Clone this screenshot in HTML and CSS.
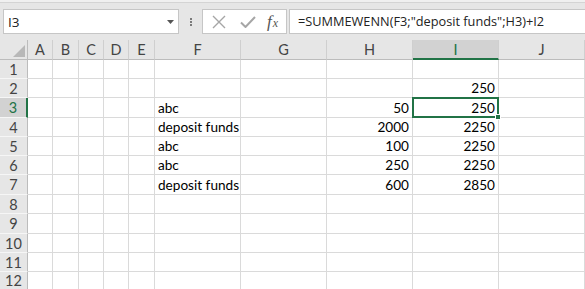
FILE: index.html
```html
<!DOCTYPE html>
<html>
<head>
<meta charset="utf-8">
<link rel="stylesheet" href="styles.css">
</head>
<body>
<div class="topstrip"></div>
<div class="fbar">
  <div class="namebox">
    <span class="nb-text">I3</span>
    <svg class="nb-arrow" width="7" height="4" viewBox="0 0 7 4"><path d="M0 0h7L3.5 4z" fill="#555"/></svg>
  </div>
  <div class="grip"><i></i><i></i><i></i></div>
  <div class="btns">
    <svg class="btn-x" width="14" height="14" viewBox="0 0 14 14"><path d="M1 1L13 13M13 1L1 13" stroke="#a6a6a6" stroke-width="1.4" fill="none"/></svg>
    <svg class="btn-ok" width="16" height="12" viewBox="0 0 16 12"><path d="M1 6.5L5.5 11L15 1" stroke="#a6a6a6" stroke-width="2" fill="none"/></svg>
    <span class="btn-fx"><span class="fx-f">f</span><span class="fx-x">x</span></span>
  </div>
  <div class="formula">=SUMMEWENN(F3;"deposit funds";H3)+I2</div>
</div>
<div class="sheet">
  <div class="corner"><svg width="12" height="12" viewBox="0 0 12 12"><path d="M12 0V12H0z" fill="#b8b8b8"/></svg></div>
  <div class="ch">A</div><div class="ch">B</div><div class="ch">C</div><div class="ch">D</div><div class="ch">E</div>
  <div class="ch">F</div><div class="ch">G</div><div class="ch">H</div><div class="ch sel-col">I</div><div class="ch">J</div>

  <div class="rh">1</div><div class="c"></div><div class="c"></div><div class="c"></div><div class="c"></div><div class="c"></div><div class="c"></div><div class="c"></div><div class="c"></div><div class="c"></div><div class="c"></div>
  <div class="rh">2</div><div class="c"></div><div class="c"></div><div class="c"></div><div class="c"></div><div class="c"></div><div class="c"></div><div class="c"></div><div class="c"></div><div class="c num">250</div><div class="c"></div>
  <div class="rh sel-row">3</div><div class="c"></div><div class="c"></div><div class="c"></div><div class="c"></div><div class="c"></div><div class="c">abc</div><div class="c"></div><div class="c num">50</div><div class="c num active">250<span class="handle"></span></div><div class="c"></div>
  <div class="rh">4</div><div class="c"></div><div class="c"></div><div class="c"></div><div class="c"></div><div class="c"></div><div class="c">deposit funds</div><div class="c"></div><div class="c num">2000</div><div class="c num">2250</div><div class="c"></div>
  <div class="rh">5</div><div class="c"></div><div class="c"></div><div class="c"></div><div class="c"></div><div class="c"></div><div class="c">abc</div><div class="c"></div><div class="c num">100</div><div class="c num">2250</div><div class="c"></div>
  <div class="rh">6</div><div class="c"></div><div class="c"></div><div class="c"></div><div class="c"></div><div class="c"></div><div class="c">abc</div><div class="c"></div><div class="c num">250</div><div class="c num">2250</div><div class="c"></div>
  <div class="rh">7</div><div class="c"></div><div class="c"></div><div class="c"></div><div class="c"></div><div class="c"></div><div class="c">deposit funds</div><div class="c"></div><div class="c num">600</div><div class="c num">2850</div><div class="c"></div>
  <div class="rh">8</div><div class="c"></div><div class="c"></div><div class="c"></div><div class="c"></div><div class="c"></div><div class="c"></div><div class="c"></div><div class="c"></div><div class="c"></div><div class="c"></div>
  <div class="rh">9</div><div class="c"></div><div class="c"></div><div class="c"></div><div class="c"></div><div class="c"></div><div class="c"></div><div class="c"></div><div class="c"></div><div class="c"></div><div class="c"></div>
  <div class="rh">10</div><div class="c"></div><div class="c"></div><div class="c"></div><div class="c"></div><div class="c"></div><div class="c"></div><div class="c"></div><div class="c"></div><div class="c"></div><div class="c"></div>
  <div class="rh">11</div><div class="c"></div><div class="c"></div><div class="c"></div><div class="c"></div><div class="c"></div><div class="c"></div><div class="c"></div><div class="c"></div><div class="c"></div><div class="c"></div>
  <div class="rh">12</div><div class="c"></div><div class="c"></div><div class="c"></div><div class="c"></div><div class="c"></div><div class="c"></div><div class="c"></div><div class="c"></div><div class="c"></div><div class="c"></div>
</div>
</body>
</html>
```
FILE: styles.css
```css
* { box-sizing: border-box; }
html, body { margin: 0; padding: 0; }
body {
  width: 585px;
  height: 289px;
  overflow: hidden;
  background: #e6e6e6;
  font-family: "Lato", "Open Sans", sans-serif;
}
.topstrip {
  height: 3px;
  background: #f0f0f0;
  border-bottom: 1px solid #d4d4d4;
}
.fbar {
  height: 37px;
  display: flex;
  align-items: flex-start;
  padding-top: 6px;
}
.namebox {
  margin-left: 3px;
  width: 176px;
  height: 25px;
  background: #fff;
  border: 1px solid #c6c6c6;
  display: flex;
  align-items: center;
  justify-content: space-between;
  padding: 0 4px 0 4px;
}
.nb-text {
  font-family: "Open Sans", sans-serif;
  font-size: 13.5px;
  color: #222;
}
.nb-arrow { margin-top: 1px; }
.grip {
  width: 23px;
  height: 25px;
  display: flex;
  flex-direction: column;
  align-items: center;
  justify-content: center;
  gap: 1px;
}
.grip i {
  display: block;
  width: 2px;
  height: 2px;
  background: #7a7a7a;
}
.btns {
  width: 85px;
  height: 25px;
  background: #fff;
  border: 1px solid #c6c6c6;
  display: flex;
  align-items: center;
  padding-left: 9px;
}
.btn-x { margin-right: 14px; }
.btn-ok { margin-right: 11px; }
.btn-fx {
  font-family: "Liberation Serif", serif;
  font-style: italic;
  color: #555;
  display: flex;
  align-items: baseline;
}
.fx-f { font-size: 17px; }
.fx-x { font-size: 12px; margin-left: 1px; }
.formula {
  margin-left: 2px;
  flex: 1;
  height: 25px;
  background: #fff;
  border: 1px solid #c6c6c6;
  border-right: none;
  font-family: "Open Sans", sans-serif;
  font-size: 12.75px;
  color: #222;
  padding-left: 8px;
  line-height: 23px;
  white-space: nowrap;
}
.sheet {
  display: grid;
  grid-template-columns: 28px 25px 26px 25px 25px 26px 86px 86px 86px 86px 86px;
  grid-template-rows: 20px 19px 19px 20px 19px 19px 19px 20px 19px 20px 19px 19px 18px;
  background: #fff;
  font-size: 13.6px;
  color: #000;
}
.corner {
  background: #e6e6e6;
  border-right: 1px solid #bcbcbc;
  border-bottom: 1px solid #bcbcbc;
  display: flex;
  align-items: flex-end;
  justify-content: flex-end;
  padding: 0 2px 2px 0;
}
.ch {
  background: #e6e6e6;
  border-right: 1px solid #cfcfcf;
  border-bottom: 1px solid #bcbcbc;
  text-align: center;
  line-height: 19px;
  color: #444;
  font-size: 14.5px;
}
.ch.sel-col {
  background: #d2d2d2;
  border-bottom: 2px solid #217346;
  color: #217346;
}
.rh {
  background: #e6e6e6;
  border-right: 1px solid #bcbcbc;
  border-bottom: 1px solid #f6f6f6;
  color: #444;
  font-size: 14.5px;
  line-height: 17px;
  display: flex;
  align-items: center;
  justify-content: center;
}
.rh.sel-row {
  background: #d2d2d2;
  border-right: 2px solid #217346;
  color: #217346;
}
.c {
  border-right: 1px solid #dadada;
  border-bottom: 1px solid #dadada;
  padding: 0 3px;
  display: flex;
  align-items: flex-end;
  white-space: nowrap;
  padding-bottom: 1px;
}
.c.num { justify-content: flex-end; }
.c.active { position: relative; }
.c.active::after {
  content: "";
  position: absolute;
  top: -1px;
  left: -1px;
  right: -1px;
  bottom: -1px;
  border: 2px solid #217346;
}
.handle {
  position: absolute;
  right: -3px;
  bottom: -3px;
  width: 6px;
  height: 6px;
  background: #217346;
  border: 1px solid #fff;
  z-index: 1;
}
```
